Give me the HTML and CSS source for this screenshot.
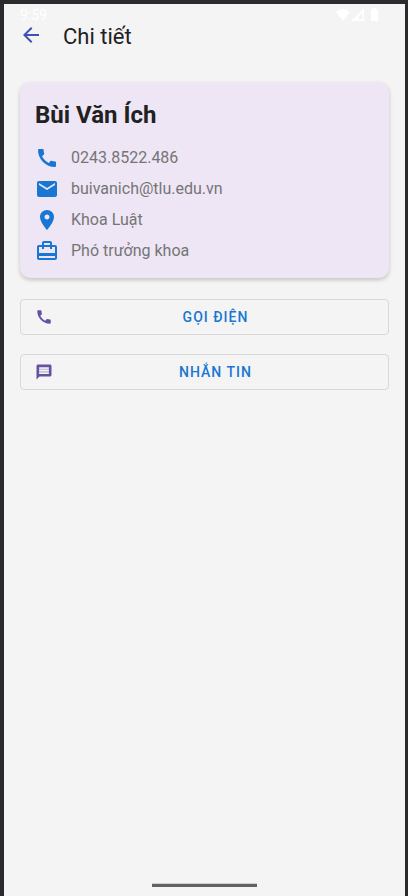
FILE: index.html
```html
<!DOCTYPE html>
<html lang="vi">
<head>
<meta charset="utf-8">
<meta name="viewport" content="width=device-width, initial-scale=1">
<title>Chi tiết</title>
<link rel="stylesheet" href="styles.css">
</head>
<body>
<div class="screen">
  <div class="status">
    <span>9:59</span>
    <svg class="status-icons" width="44" height="14" viewBox="0 0 44 14" aria-hidden="true">
      <path d="M0 4Q7-2 14 4L7 13Z"/>
      <path fill-rule="evenodd" d="M28 0V13H15ZM26.500 5L23 8.500V11.500H26.500Z"/>
      <path d="M35 1.500h2V0h3v1.500h2V13h-7z"/>
    </svg>
  </div>
  <header class="appbar">
    <button class="back" type="button" aria-label="Quay lại">
      <svg width="24" height="24" viewBox="0 0 24 24"><path d="M20 11H7.830l5.590-5.590L12 4l-8 8 8 8 1.410-1.410L7.830 13H20z"/></svg>
    </button>
    <h1 class="title">Chi tiết</h1>
  </header>
  <main class="content">
    <section class="card">
      <h2 class="name">Bùi Văn Ích</h2>
      <ul class="details">
        <li><svg width="24" height="24" viewBox="0 0 24 24"><path d="M20.010 15.380c-1.230 0-2.420-.2-3.530-.56-.35-.12-.74-.03-1.010.24l-1.570 1.970c-2.830-1.350-5.480-3.900-6.890-6.830l1.950-1.660c.27-.28.35-.67.24-1.020-.37-1.110-.56-2.300-.56-3.530 0-.54-.45-.99-.99-.99H4.190C3.650 3 3 3.240 3 3.990 3 13.280 10.730 21 20.010 21c.71 0 .99-.63.99-1.180v-3.450c0-.54-.45-.99-.99-.99z"/></svg><span>0243.8522.486</span></li>
        <li><svg width="24" height="24" viewBox="0 0 24 24"><path d="M20 4H4c-1.100 0-2 .9-2 2v12c0 1.100.9 2 2 2h16c1.100 0 2-.9 2-2V6c0-1.100-.9-2-2-2zm0 4l-8 5-8-5V6l8 5 8-5v2z"/></svg><span>buivanich@tlu.edu.vn</span></li>
        <li><svg width="24" height="24" viewBox="0 0 24 24"><path d="M12 2C8.130 2 5 5.130 5 9c0 5.250 7 13 7 13s7-7.750 7-13c0-3.870-3.130-7-7-7zm0 9.500c-1.380 0-2.500-1.120-2.500-2.500s1.120-2.500 2.500-2.500 2.500 1.120 2.500 2.500-1.120 2.500-2.500 2.500z"/></svg><span>Khoa Luật</span></li>
        <li><svg width="24" height="24" viewBox="0 0 24 24"><path fill-rule="evenodd" d="M20 6h-3V4c0-1.110-.89-2-2-2H9c-1.110 0-2 .89-2 2v2H4c-1.110 0-2 .89-2 2v11c0 1.110.89 2 2 2h16c1.110 0 2-.89 2-2V8c0-1.110-.89-2-2-2zM9 4h6v2H9V4zm11 15H4v-2h16v2zm0-5H4V8h3v2h2V8h6v2h2V8h3v6z"/></svg><span>Phó trưởng khoa</span></li>
      </ul>
    </section>
    <button class="action" type="button">
      <svg width="18" height="18" viewBox="0 0 24 24"><path d="M20.010 15.380c-1.230 0-2.420-.2-3.530-.56-.35-.12-.74-.03-1.010.24l-1.570 1.970c-2.830-1.350-5.480-3.900-6.890-6.830l1.950-1.660c.27-.28.35-.67.24-1.020-.37-1.110-.56-2.300-.56-3.530 0-.54-.45-.99-.99-.99H4.190C3.650 3 3 3.240 3 3.990 3 13.280 10.730 21 20.010 21c.71 0 .99-.63.99-1.180v-3.450c0-.54-.45-.99-.99-.99z"/></svg>
      <span>GỌI ĐIỆN</span>
    </button>
    <button class="action" type="button">
      <svg width="18" height="18" viewBox="0 0 24 24"><path fill-rule="evenodd" d="M20 2H4c-1.100 0-1.990.9-1.990 2L2 22l4-4h14c1.100 0 2-.9 2-2V4c0-1.100-.9-2-2-2zM5.500 5.500h13v9h-13z"/><path opacity=".4" d="M5.500 7.500h13v1.500h-13zM5.500 11h13v1.500h-13z"/></svg>
      <span>NHẮN TIN</span>
    </button>
  </main>
  <div class="home-bar"></div>
</div>
</body>
</html>
```
FILE: styles.css
```css
* {
  box-sizing: border-box;
}

body {
  margin: 0;
  background: #f4f4f4;
  color: #212121;
  font-family: Roboto, "Noto Sans", sans-serif;
}

svg {
  display: block;
  flex: none;
  fill: currentColor;
}

button {
  font: inherit;
  cursor: pointer;
}

.screen {
  display: flex;
  flex-direction: column;
  min-height: 100vh;
  border: solid #2b2a2f;
  border-width: 4px 3px 0 4px;
}

.status {
  display: flex;
  align-items: center;
  justify-content: space-between;
  height: 16px;
  margin-top: 3px;
  padding: 0 25px 0 16px;
  color: #fff;
  font-size: 14px;
  line-height: 16px;
}

.appbar {
  display: flex;
  align-items: flex-start;
  gap: 20px;
  height: 28px;
  padding: 0 15px;
}

.back {
  padding: 0;
  border: 0;
  background: none;
  color: #3f51b5;
}

.title {
  margin: 0;
  font-size: 22px;
  font-weight: 400;
  line-height: 28px;
}

.content {
  display: flex;
  flex: 1;
  flex-direction: column;
  gap: 19px;
  padding: 31px 16px;
}

.card {
  margin-bottom: 2px;
  padding: 17px 15px 15px;
  border-radius: 10px;
  background: #eee6f5;
  box-shadow: 0 2px 4px rgba(0, 0, 0, 0.2);
}

.name {
  margin: 0 0 15px;
  font-size: 24px;
  font-weight: 700;
  line-height: 32px;
}

.details {
  display: flex;
  flex-direction: column;
  gap: 7px;
  margin: 0;
  padding: 0;
  list-style: none;
  color: #757575;
  font-size: 16px;
  line-height: 24px;
}

.details li {
  display: flex;
  align-items: center;
  gap: 12px;
}

.details svg {
  color: #1976d2;
}

.action {
  display: flex;
  align-items: center;
  gap: 4px;
  height: 36px;
  padding: 0 14px;
  border: 1px solid #d8d8d8;
  border-radius: 4px;
  background: none;
  color: #1976d2;
  font-size: 14px;
  font-weight: 500;
  letter-spacing: 1px;
}

.action svg {
  color: #6750a4;
}

.action span {
  flex: 1;
  text-align: center;
}

.home-bar {
  align-self: center;
  width: 105px;
  height: 4px;
  margin-bottom: 9px;
  border-top: 1px solid #cfcfcf;
  background: #626262;
}
```
